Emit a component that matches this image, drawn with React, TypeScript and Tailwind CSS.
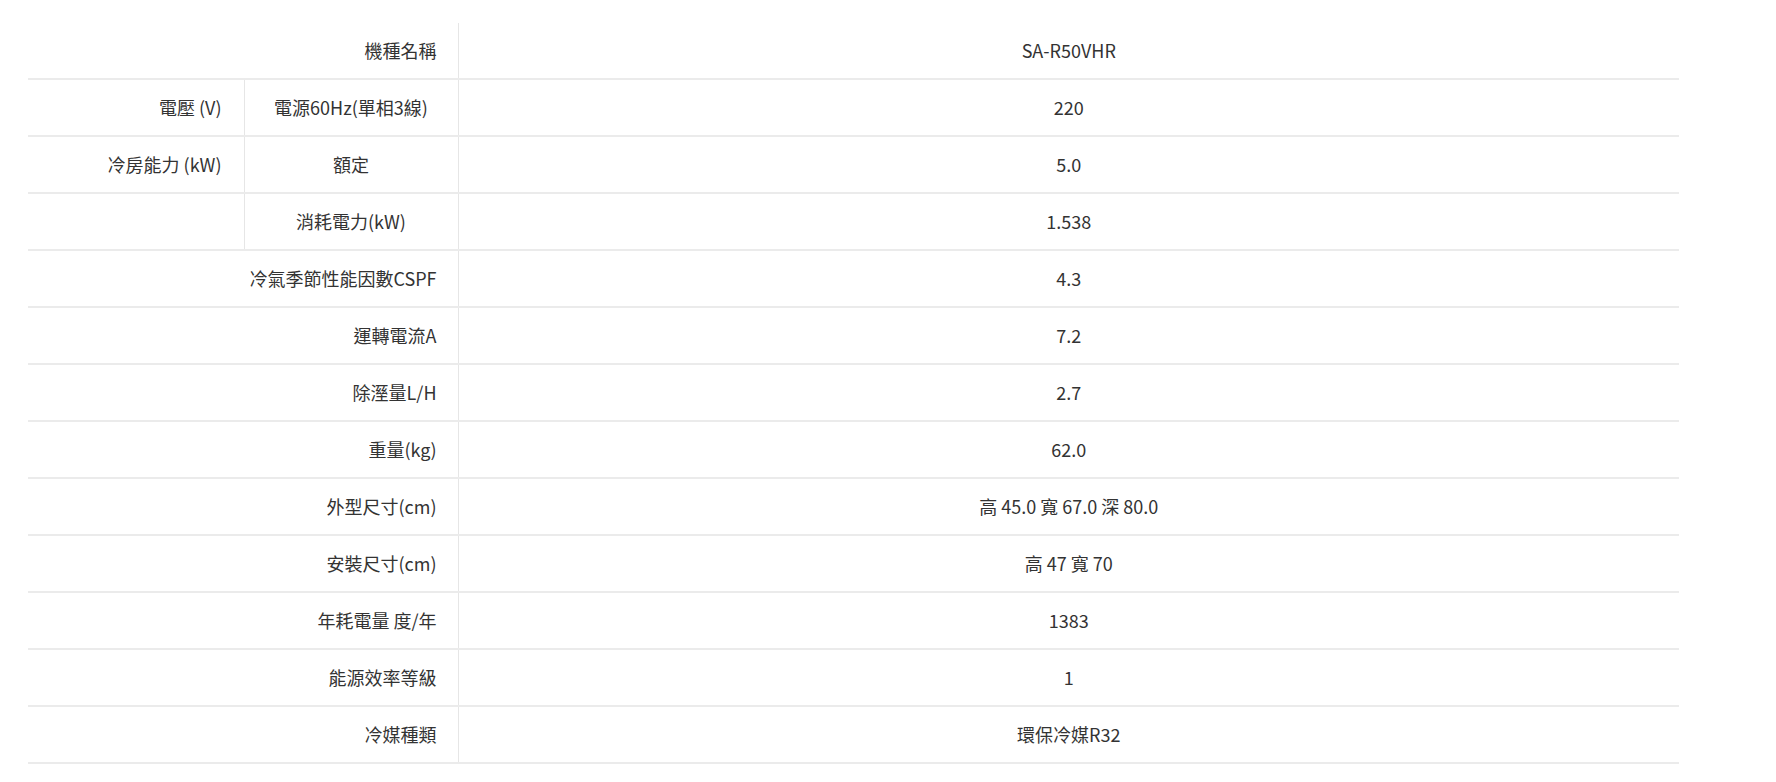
import React from "react";

type Row = {
  label: string;
  sub?: string;
  value: string;
  split?: boolean;
};

const rows: Row[] = [
  { label: "機種名稱", value: "SA-R50VHR" },
  { label: "電壓 (V)", sub: "電源60Hz(單相3線)", value: "220", split: true },
  { label: "冷房能力 (kW)", sub: "額定", value: "5.0", split: true },
  { label: "", sub: "消耗電力(kW)", value: "1.538", split: true },
  { label: "冷氣季節性能因數CSPF", value: "4.3" },
  { label: "運轉電流A", value: "7.2" },
  { label: "除溼量L/H", value: "2.7" },
  { label: "重量(kg)", value: "62.0" },
  { label: "外型尺寸(cm)", value: "高 45.0 寬 67.0 深 80.0" },
  { label: "安裝尺寸(cm)", value: "高 47 寬 70" },
  { label: "年耗電量 度/年", value: "1383" },
  { label: "能源效率等級", value: "1" },
  { label: "冷媒種類", value: "環保冷媒R32" },
];

function SpecRow({ row }: { row: Row }) {
  return (
    <div className="grid grid-cols-[215.5px_214px_1fr] h-[57px] border-b-2 border-[#ebebeb]">
      {row.split ? (
        <>
          <div className="flex items-center justify-end pr-[22px]">
            {row.label}
          </div>
          <div className="flex items-center justify-center border-l border-[#e6e6e6]">
            {row.sub}
          </div>
        </>
      ) : (
        <div className="col-span-2 flex items-center justify-end pr-[21px]">
          {row.label}
        </div>
      )}
      <div className="flex items-center justify-center border-l border-[#e6e6e6]">
        {row.value}
      </div>
    </div>
  );
}

export default function App() {
  return (
    <div
      className="w-[1776px] h-[782px] bg-white pt-[23px] pl-[28px] text-[18px] text-[#333333] overflow-hidden"
      style={{ fontFamily: '"Noto Sans CJK TC", "Noto Sans", sans-serif' }}
    >
      <div className="w-[1651px] flex flex-col">
        {rows.map((row, i) => (
          <SpecRow key={i} row={row} />
        ))}
      </div>
    </div>
  );
}
